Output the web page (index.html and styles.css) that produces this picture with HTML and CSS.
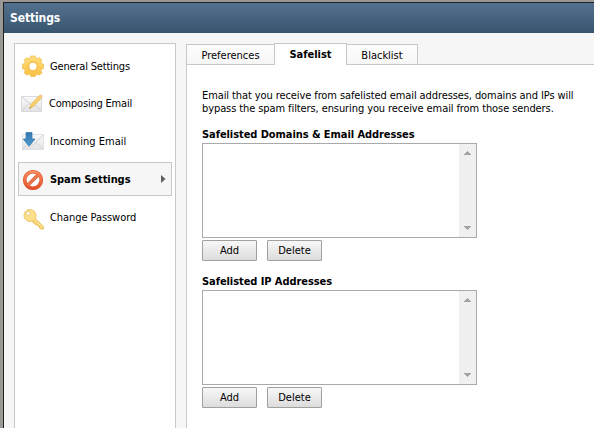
FILE: index.html
```
<!DOCTYPE html>
<html lang="en">
<head>
<meta charset="utf-8">
<title>Settings</title>
<link rel="stylesheet" href="styles.css">
</head>
<body>
<div class="dialog">
  <header class="title-bar">Settings</header>
  <div class="content">
    <nav class="sidebar">
      <a class="item general">
        <svg class="icon" width="22" height="22" viewBox="0 0 22 22">
          <defs><linearGradient id="gold" x2="0" y2="1"><stop stop-color="#ffde7c"/><stop offset="1" stop-color="#fabf42"/></linearGradient></defs>
          <path d="M8.800 1h4.400l.7 2 1.500.6 2-1 2.500 2.500-1 2 .7 1.500 2 .7v4.200l-2 .7-.7 1.500 1 2-2.500 2.500-2-1-1.500.6-.7 1.700H8.800l-.7-1.700-1.500-.6-2 1-2.500-2.500 1-2-.7-1.500-2-.7V9.300l2-.7.7-1.500-1-2 2.500-2.500 2 1L8.100 3zM11 7.400a4 4 0 1 0 0 8 4 4 0 0 0 0-8z" fill="url(#gold)" stroke="#eebb50" stroke-width=".7" stroke-linejoin="round"/>
          <circle cx="11" cy="11.400" r="5" fill="none" stroke="#f5bd45" stroke-width=".8"/>
        </svg>
        <span>General Settings</span>
      </a>
      <a class="item composing">
        <svg class="icon" width="22" height="22" viewBox="0 0 22 22">
          <defs><linearGradient id="paper" x2="0" y2="1"><stop stop-color="#fbfbfb"/><stop offset="1" stop-color="#e2e3e4"/></linearGradient></defs>
          <path d="M.5 4.500h20v15H.5z" fill="url(#paper)" stroke="#dadadc"/>
          <path d="M1 5l9.500 8L20 5M1 19l7-7.500M20 19l-7-7.500" fill="none" stroke="#cfd0d2"/>
          <path d="M8.500 16.500l1.500-4.200L19 3.100l2 2.200-8.500 9.200z" fill="#fad06f" stroke="#e7b653" stroke-width=".7"/>
          <path d="M19 3l1-.9 1.800 2-1 1z" fill="#f6c7a0"/><path d="M8.300 16.700l.7-2 1.200 1.200z" fill="#9b8764"/>
        </svg>
        <span>Composing Email</span>
      </a>
      <a class="item incoming">
        <svg class="icon" width="22" height="22" viewBox="0 0 22 22">
          <defs><linearGradient id="blue" x2="0" y2="1"><stop stop-color="#3378ad"/><stop offset="1" stop-color="#4f9ad0"/></linearGradient></defs>
          <path d="M.5 4.500h21v15H.5z" fill="url(#paper)" stroke="#dfe2e5"/>
          <path d="M8 13l3 2.500L21 5M1 19l6-6M21 19l-7-6" fill="none" stroke="#cfd3d6"/>
          <path d="M4 2.500h6v6.500h3L7 16.300 1.300 9H4z" fill="url(#blue)" stroke="#3d7eb1" stroke-width=".8"/>
        </svg>
        <span>Incoming Email</span>
      </a>
      <a class="item spam selected">
        <svg class="icon" width="22" height="22" viewBox="0 0 22 22">
          <defs><linearGradient id="red" x2="0" y2="1"><stop stop-color="#f98d5c"/><stop offset="1" stop-color="#e5502a"/></linearGradient></defs>
          <circle cx="11" cy="12" r="8.300" fill="#fff" stroke="#d65330" stroke-width="3.600"/>
          <path d="M5.500 17.500L16.500 6.500" stroke="#dc6039" stroke-width="3.400"/>
          <circle cx="11" cy="12" r="8.300" fill="none" stroke="url(#red)" stroke-width="2.600"/>
          <path d="M5.500 17.500L16.500 6.500" stroke="#f1764b" stroke-width="2.300"/>
        </svg>
        <span>Spam Settings</span>
        <svg class="arrow" width="5" height="8" viewBox="0 0 5 8"><path d="M0 0l4.500 4L0 8z" fill="#606060"/></svg>
      </a>
      <a class="item password">
        <svg class="icon" width="22" height="22" viewBox="0 0 22 22">
          <path d="M10.500 8.500l10 10v2.500h-3l-1-1v-2h-2l-1-1.500h-1.500L8 12z" fill="#f9d270" stroke="#e8bb58" stroke-width=".8"/>
          <circle cx="7" cy="7.500" r="6" fill="#fce08a" stroke="#ebc15d" stroke-width=".9"/>
          <path d="M11 11l8.500 8.500" stroke="#fff0b0"/>
          <circle cx="5.200" cy="5.400" r="1.900" fill="#fff" stroke="#e5bd5d" stroke-width=".7"/>
        </svg>
        <span>Change Password</span>
      </a>
    </nav>
    <main class="main">
      <div class="tabs">
        <div class="tab preferences"><span>Preferences</span></div>
        <div class="tab active"><span>Safelist</span></div>
        <div class="tab blacklist"><span>Blacklist</span></div>
      </div>
      <section class="panel">
        <p class="intro">Email that you receive from safelisted email addresses, domains and IPs will<br>bypass the spam filters, ensuring you receive email from those senders.</p>
        <div class="group">
          <h2>Safelisted Domains &amp; Email Addresses</h2>
          <div class="list"><div class="scroll">
            <svg width="7" height="4" viewBox="0 0 7 4" shape-rendering="crispEdges"><path d="M3 0h1v1h1v1h1v1h1v1H0V3h1V2h1V1h1z"/></svg>
            <svg width="7" height="4" viewBox="0 0 7 4" shape-rendering="crispEdges"><path d="M0 0h7v1H6v1H5v1H4v1H3V3H2V2H1V1H0z"/></svg>
          </div></div>
          <div class="buttons"><button>Add</button><button>Delete</button></div>
        </div>
        <div class="group">
          <h2>Safelisted IP Addresses</h2>
          <div class="list"><div class="scroll">
            <svg width="7" height="4" viewBox="0 0 7 4" shape-rendering="crispEdges"><path d="M3 0h1v1h1v1h1v1h1v1H0V3h1V2h1V1h1z"/></svg>
            <svg width="7" height="4" viewBox="0 0 7 4" shape-rendering="crispEdges"><path d="M0 0h7v1H6v1H5v1H4v1H3V3H2V2H1V1H0z"/></svg>
          </div></div>
          <div class="buttons"><button>Add</button><button>Delete</button></div>
        </div>
      </section>
    </main>
  </div>
</div>
</body>
</html>
```
FILE: styles.css
```
* { box-sizing: border-box; }
body {
  margin: 0;
  height: 428px;
  overflow: hidden;
  padding: 2px 0 0 3px;
  background: #999895;
  font: 11px/13px "DejaVu Sans Condensed", "DejaVu Sans", sans-serif;
  font-stretch: condensed;
  color: #000;
}
.dialog {
  height: 426px;
  border: solid #202020;
  border-width: 1px 0 0 1px;
  background: #f6f6f6;
}
.title-bar {
  height: 30px;
  padding: 0 6px;
  background: linear-gradient(#53718e, #38556f);
  color: #fff;
  font-size: 12px;
  font-weight: bold;
  letter-spacing: -.1px;
  line-height: 30px;
}
.content { display: flex; height: 395px; padding: 10px 0 0 10px; }
.sidebar {
  flex: none;
  width: 162px;
  border: 1px solid #c8c8c8;
  border-bottom: 0;
  background: #fff;
  padding: 5px 3px 0;
}
.item {
  display: flex;
  align-items: center;
  height: 34px;
  margin-bottom: 4px;
  padding-left: 3px;
  border: 1px solid transparent;
  white-space: nowrap;
}
.general { margin-bottom: 3px; letter-spacing: -.18px; }
.composing { letter-spacing: -.2px; }
.item .icon { flex: none; margin-right: 6px; }
.composing .icon { margin-left: -1px; }
.password { letter-spacing: -.07px; }
.password .icon { margin-left: 1px; margin-right: 5px; margin-top: 4px; }
.selected { border-color: #c8c8c8; background: #f6f6f6; font-weight: bold; letter-spacing: -.07px; }
.arrow { margin-left: auto; margin-right: 5px; }
.main { flex: 1; margin-left: 10px; display: flex; flex-direction: column; }
.tabs { display: flex; align-items: flex-end; height: 21px; }
.tab {
  height: 20px;
  border: 1px solid #c8c8c8;
  border-bottom: 0;
  background: linear-gradient(#fdfdfd, #f6f6f6);
  text-align: center;
  line-height: 21px;
}
.preferences { width: 89px; }
.tab.active {
  position: relative;
  height: 22px;
  width: 73px;
  margin: 0 -1px -1px -1px;
  background: #fff;
  font-weight: bold;
  line-height: 21px;
}
.blacklist { width: 72px; }
.panel {
  flex: 1;
  border: solid #c8c8c8;
  border-width: 1px 0 0 1px;
  background: #fff;
  padding: 24px 0 0 15px;
}
.intro { margin: 0 0 13px; white-space: nowrap; letter-spacing: -.095px; }
.group { margin-bottom: 14px; }
h2 { margin: 0 0 2px; font-size: 11px; line-height: 13px; letter-spacing: -.07px; }
.list {
  display: flex;
  justify-content: flex-end;
  width: 275px;
  height: 95px;
  border: 1px solid #a9a9a9;
}
.scroll {
  display: flex;
  flex-direction: column;
  justify-content: space-between;
  align-items: center;
  width: 17px;
  padding: 7px 0;
  background: #f0f0f0;
  fill: #a3a3a3;
}
.buttons { display: flex; gap: 10px; margin-top: 2px; }
button {
  width: 55px;
  height: 21px;
  padding: 0;
  border: 1px solid #a0a0a0;
  border-radius: 1px;
  background: linear-gradient(#f8f8f8, #dcdcdc);
  font: inherit;
  color: #000;
}
```
